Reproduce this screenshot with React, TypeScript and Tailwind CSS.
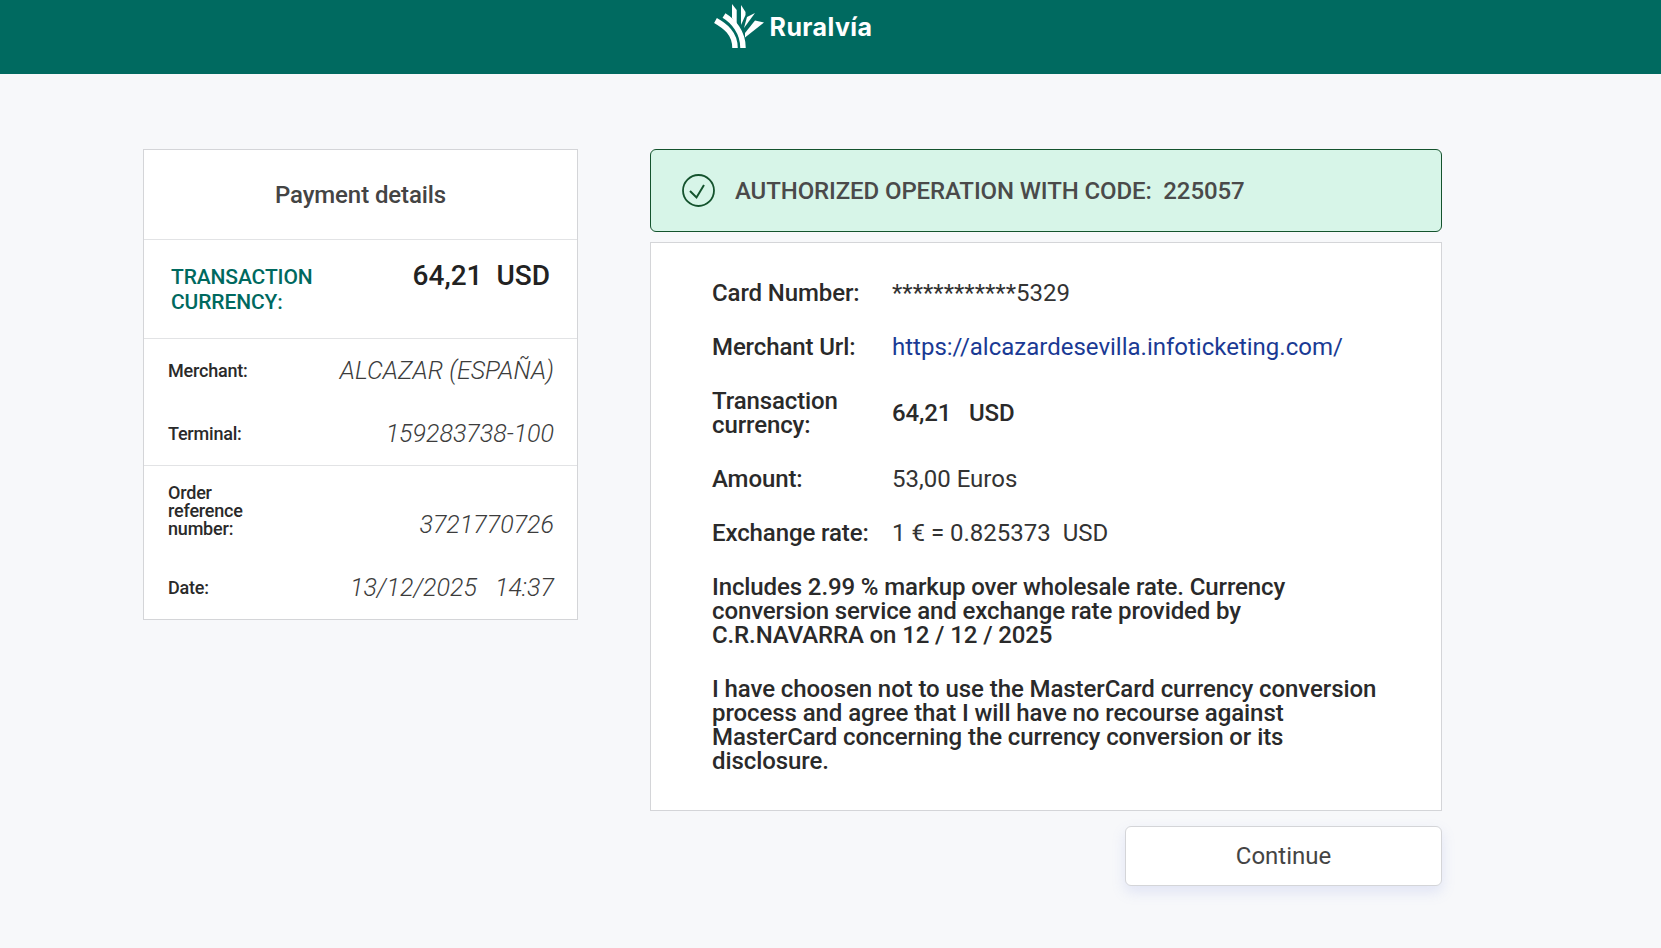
import type { ReactNode } from "react"

function Logo() {
  return (
    <svg width="60" height="52" viewBox="0 0 60 52" fill="#fff">
      <path d="M24 4l4.700 6v15l-4.700-7z" />
      <path d="M33 5l4.500 7v3l-4.500 10z" />
      <path d="M47 13l-8 4-3 11z" />
      <path d="M56 22.500l-9-2-10 12.500v4.500z" />
      <path d="M7.500 20.500C17 26 27 33 27 48" fill="none" stroke="#fff" strokeWidth="5.500" />
      <path d="M16 15.500C25 21 35 32 35 48" fill="none" stroke="#fff" strokeWidth="5.500" />
    </svg>
  )
}

function CheckIcon() {
  return (
    <svg width="33" height="33" viewBox="0 0 33 33" fill="none" stroke="#14532d" strokeWidth="1.800">
      <circle cx="16.500" cy="16.500" r="15.500" />
      <path d="M8 17l6.500 6.500L22 11" strokeWidth="2" />
    </svg>
  )
}

type RowProps = {
  label: string
  value: string
  className?: string
  labelClassName?: string
}

function Row({ label, value, className, labelClassName }: RowProps) {
  return (
    <div className={`flex items-center justify-between pl-6 pr-[23px] ${className ?? ""}`}>
      <span className={`w-24 text-[18px] leading-[18px] font-medium tracking-[-0.2px] text-[#2a2a2a] ${labelClassName ?? ""}`}>{label}</span>
      <span className="text-[25px] italic font-light text-[#3c3c3c] whitespace-pre">{value}</span>
    </div>
  )
}

function DetailRow({ label, children, className }: { label: string; children: ReactNode; className?: string }) {
  return (
    <div className={`flex items-center ${className ?? ""}`}>
      <span className="w-[180px] shrink-0 font-medium tracking-[-0.11px] text-[#2a2a2a] leading-6">{label}</span>
      <div className="text-[#333]">{children}</div>
    </div>
  )
}

export default function App() {
  return (
    <div className="min-h-[948px] bg-[#f7f8fa] font-['Roboto',sans-serif]">
      <header className="h-[74px] bg-[#006a60] flex justify-center pr-[81px]">
        <div className="flex items-start gap-[2px]">
          <Logo />
          <span className="mt-[11px] font-['Inter',sans-serif] text-[25px] leading-8 font-bold tracking-[0.4px] text-white">Ruralvía</span>
        </div>
      </header>
      <main className="flex items-start gap-[72px] pt-[75px] pl-[143px]">
        <section className="w-[435px] h-[471px] bg-white border border-[#d4d5d8] flex flex-col">
          <h2 className="h-[90px] shrink-0 border-b border-[#e2e3e5] flex items-center justify-center text-2xl font-medium tracking-[-0.1px] text-[#444]">
            Payment details
          </h2>
          <div className="h-[99px] shrink-0 border-b border-[#e2e3e5] flex items-start justify-between pl-[27px] pr-[27px]">
            <span className="mt-[25px] w-40 text-[21px] leading-[25px] font-medium tracking-[-0.12px] text-[#00695f]">TRANSACTION CURRENCY:</span>
            <span className="mt-[18px] text-[28px] leading-[36px] font-medium text-[#222] whitespace-pre">64,21  USD</span>
          </div>
          <div className="h-[127px] shrink-0 border-b border-[#e2e3e5] pt-[12px]">
            <Row label="Merchant:" value="ALCAZAR (ESPAÑA)" className="h-[40px] mb-[23px]" />
            <Row label="Terminal:" value="159283738-100" className="h-[40px]" />
          </div>
          <div className="pt-[9px]">
            <Row label="Order reference number:" value="3721770726" className="h-[100px]" labelClassName="mb-[28px]" />
            <Row label="Date:" value="13/12/2025   14:37" className="h-[26px]" />
          </div>
        </section>
        <div className="w-[792px] flex flex-col">
          <div className="h-[83px] bg-[#d7f5e8] border border-[#14532d] rounded-md flex items-center pl-[31px] gap-[20px]">
            <CheckIcon />
            <span className="text-2xl font-medium tracking-[-0.11px] text-[#4a4a4a] whitespace-pre">AUTHORIZED OPERATION WITH CODE:  225057</span>
          </div>
          <section className="mt-[10px] h-[569px] bg-white border border-[#d4d5d8] pl-[61px] pr-[60px] pt-[38px] text-2xl">
            <DetailRow label="Card Number:" className="h-6">************5329</DetailRow>
            <DetailRow label="Merchant Url:" className="mt-[30px] h-6">
              <a className="text-[#1a3a94]">https://alcazardesevilla.infoticketing.com/</a>
            </DetailRow>
            <DetailRow label="Transaction currency:" className="mt-[30px]">
              <span className="font-medium tracking-[-0.11px] text-[#2a2a2a] whitespace-pre">64,21   USD</span>
            </DetailRow>
            <DetailRow label="Amount:" className="mt-[30px] h-6">53,00 Euros</DetailRow>
            <DetailRow label="Exchange rate:" className="mt-[30px] h-6">
              <span className="whitespace-pre">1 € = 0.825373  USD</span>
            </DetailRow>
            <p className="mt-[30px] font-medium tracking-[-0.11px] text-[#2a2a2a] leading-6">
              Includes 2.99 % markup over wholesale rate. Currency conversion service and exchange rate provided by C.R.NAVARRA on 12 / 12 / 2025
            </p>
            <p className="mt-[30px] font-medium tracking-[-0.08px] text-[#2a2a2a] leading-6">
              I have choosen not to use the MasterCard currency conversion process and agree that I will have no recourse against MasterCard concerning the currency conversion or its disclosure.
            </p>
          </section>
          <div className="flex justify-end mt-[15px]">
            <button className="w-[317px] h-[60px] bg-white border border-[#d4d5d8] rounded-md text-2xl text-[#444] shadow-[0_6px_14px_rgba(120,140,220,0.18)]">
              Continue
            </button>
          </div>
        </div>
      </main>
    </div>
  )
}
